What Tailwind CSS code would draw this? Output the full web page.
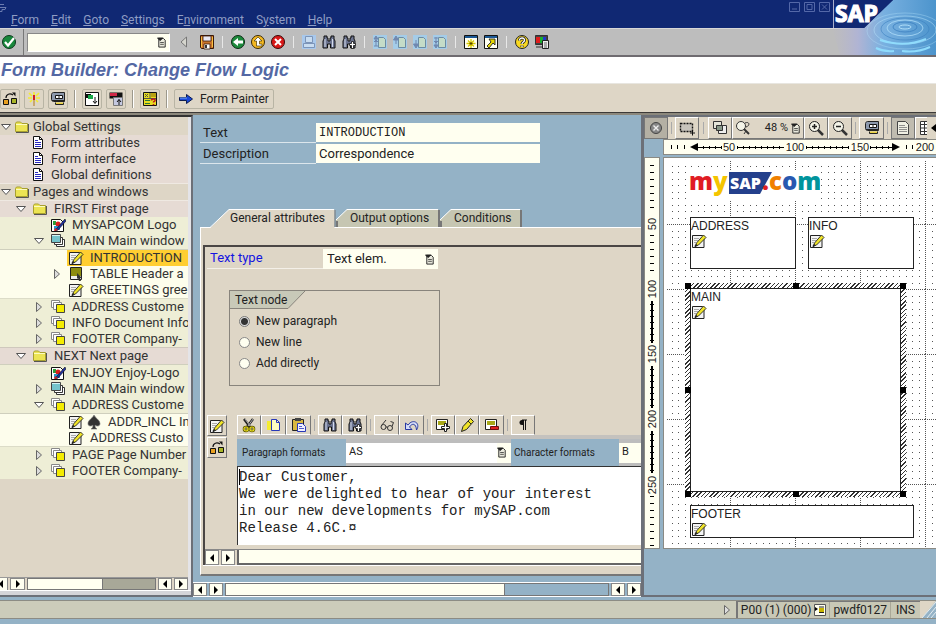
<!DOCTYPE html>
<html lang="en">
<head>
  <meta charset="UTF-8">
  <meta name="viewport" content="width=device-width, initial-scale=1.0">
  <title>Form Builder: Change Flow Logic</title>
  <script src="https://cdn.jsdelivr.net/npm/@tailwindcss/browser@4"></script>
</head>
<body class="min-h-screen flex flex-col overflow-hidden bg-[#94b2c6] font-[Roboto,'Liberation_Sans',sans-serif] text-xs text-[#222]">

  <!-- Icon sprite -->
  <svg class="hidden">
    <symbol id="i-check" viewBox="0 0 16 16"><circle cx="8" cy="8" r="6.5" fill="#18883c" stroke="#0c3a1c"/><path d="M4 8l3 3.5L13 4" fill="none" stroke="#fff" stroke-width="2.2"/></symbol>
    <symbol id="i-list" viewBox="0 0 10 12"><path d="M1.500 1.500h5l2 2v7.500h-7z" fill="#e8e8dc" stroke="#222"/><path d="M0 1h6L3 4zM3 6h4M3 8h4" fill="#222" stroke="#222" stroke-width=".8"/></symbol>
    <symbol id="i-left" viewBox="0 0 10 12"><path d="M7.500 1v10L2 6z" fill="#d6d6ce" stroke="#777"/></symbol>
    <symbol id="i-save" viewBox="0 0 16 16"><path d="M1.500 1.500h13v13h-12l-1-1z" fill="#c8742c" stroke="#3a1a08"/><path d="M4 2h8v5H4z" fill="#e8e8f4" stroke="#3a1a08" stroke-width=".8"/><path d="M5 10h6v5H5z" fill="#fff" stroke="#3a1a08" stroke-width=".8"/><path d="M6 11h2v3H6z" fill="#333"/><path d="M2.500 3v10M13.500 3v10" stroke="#f8c040"/></symbol>
    <symbol id="i-back" viewBox="0 0 16 16"><circle cx="8" cy="8" r="6.500" fill="#1c8a3c" stroke="#0c2a14"/><path d="M3 8l5-4v2.500h5v3H8V12z" fill="#fff"/></symbol>
    <symbol id="i-exit" viewBox="0 0 16 16"><circle cx="8" cy="8" r="6.500" fill="#f4b820" stroke="#3a2a08"/><path d="M8 3l4 4h-2.500v3H12v2H6.500V7H4z" fill="#fff" stroke="#4a3a08" stroke-width=".7"/></symbol>
    <symbol id="i-cancel" viewBox="0 0 16 16"><circle cx="8" cy="8" r="6.500" fill="#d81818" stroke="#3a0808"/><path d="M5 5l6 6M11 5l-6 6" stroke="#fff" stroke-width="2"/></symbol>
    <symbol id="i-print" viewBox="0 0 16 16"><path d="M1 1h14v14H1z" fill="#a8c8ec"/><path d="M4.500 2.500h7v6h-7zM2.500 9.500h11v4h-11z" fill="#c8dcf0" stroke="#7c94b8"/></symbol>
    <symbol id="i-find" viewBox="0 0 16 16"><path d="M3 2h3v2h1v3h2V4h1V2h3v3l1 2v7H9.500v-4h-3v4H2V7l1-2z" fill="#6c7490" stroke="#111"/><path d="M4 5v8M11.500 5v8" stroke="#d4dcec"/></symbol>
    <symbol id="i-findnext" viewBox="0 0 16 16"><path d="M3 2h3v2h1v3h2V4h1V2h3v3l1 2v7H9.500v-4h-3v4H2V7l1-2z" fill="#6c7490" stroke="#111"/><path d="M4 5v8" stroke="#d4dcec"/><path d="M10.500 7.500h2v2h2v2h-2v3h-2v-3h-2v-2h2z" fill="#fff" stroke="#111" stroke-width=".8"/></symbol>
    <symbol id="i-pg" viewBox="0 0 16 16"><path d="M1 1h14v14H1z" fill="#a4cce8"/><path d="M6.500 3.500h5l2 2v8h-7z" fill="#c4dcc8" stroke="#6c8ca4"/></symbol>
    <symbol id="i-up1" viewBox="0 0 16 16"><use href="#i-pg"/><path d="M4 5v7M2 5l2-3 2 3zM2 12h4M2 8l2-2 2 2" fill="#7088b0" stroke="#7088b0"/></symbol>
    <symbol id="i-up2" viewBox="0 0 16 16"><use href="#i-pg"/><path d="M4 5v5M1.500 6L4 2l2.500 4z" fill="#7088b0" stroke="#7088b0"/></symbol>
    <symbol id="i-dn1" viewBox="0 0 16 16"><use href="#i-pg"/><path d="M4 6v5M1.500 10L4 14l2.500-4z" fill="#7088b0" stroke="#7088b0"/></symbol>
    <symbol id="i-dn2" viewBox="0 0 16 16"><use href="#i-pg"/><path d="M4 3v8M2 11l2 3 2-3zM2 4h4M2 7l2 2 2-2" fill="#7088b0" stroke="#7088b0"/></symbol>
    <symbol id="i-session" viewBox="0 0 16 16"><path d="M1.500 1.500h13v13h-13z" fill="#fffff0" stroke="#111"/><path d="M2 2h12v2H2z" fill="#1c5894"/><path d="M8 5v9M3.500 9.500h9M5 6.500l6 6M11 6.500l-6 6" stroke="#d8c800" stroke-width="1.300"/><path d="M8 8v3M6.500 9.500h3" stroke="#554400"/></symbol>
    <symbol id="i-shortcut" viewBox="0 0 16 16"><path d="M1.500 1.500h13v13h-13z" fill="#fffff0" stroke="#111"/><path d="M2 2h12v2H2z" fill="#1c5894"/><path d="M6 5h6v6l-2-2-4 5-2-2 4-4z" fill="#e8d800" stroke="#222" stroke-width=".9"/></symbol>
    <symbol id="i-help" viewBox="0 0 16 16"><circle cx="8" cy="8" r="6.500" fill="#f8d820" stroke="#222"/><path d="M5.500 6.500c0-3.500 5.500-3.200 5 0C10.200 8 8 8 8 10M8 11.500V13" fill="none" stroke="#222" stroke-width="3"/><path d="M5.500 6.500c0-3.500 5.500-3.200 5 0C10.200 8 8 8 8 10M8 11.500V13" fill="none" stroke="#fff" stroke-width="1.300"/></symbol>
    <symbol id="i-layout" viewBox="0 0 16 16"><path d="M1.500 1.500h12v9h-12z" fill="#444" stroke="#333"/><path d="M2 3h4v6H2z" fill="#e01c1c"/><path d="M6 3h3v6H6z" fill="#18b030"/><path d="M9 3h3v6H9z" fill="#2038d0"/><path d="M2 12h8v2H2z" fill="#777"/><path d="M8.500 6.500h6v8h-6z" fill="#eee" stroke="#222"/><path d="M10 9h3M10 11h3M10 13h3" stroke="#444" stroke-width=".8"/></symbol>

    <symbol id="i-flow" viewBox="0 0 16 16"><path d="M1.500 8.500h5v5h-5z" fill="#e8a020" stroke="#111"/><path d="M9.500 7.500h5v5h-5z" fill="#a8b428" stroke="#111"/><path d="M4 7C4 3 8 2 11 4" fill="none" stroke="#111" stroke-width="1.200"/><path d="M10 1.500h3.500v4z" fill="#111"/></symbol>
    <symbol id="i-wand" viewBox="0 0 16 16"><path d="M8 1v4M3 2l3 3M13 2l-3 3M2 7h4M10 7h4M4 11l2-2M12 11l-2-2" stroke="#f4ec30" stroke-width="1.600"/><path d="M7 4h2v5H7z" fill="#d02020"/><path d="M7 9h2v6H7z" fill="#c8a870"/></symbol>
    <symbol id="i-gauge" viewBox="0 0 16 16"><path d="M1.500 3.500c0-1 1-2 2-2h11v9h-11c-1 0-2-1-2-2z" fill="#8c98ac" stroke="#222"/><path d="M5.500 4.500h7v3h-7z" fill="#fff" stroke="#111"/><path d="M9 4v4M2 9.500h12" stroke="#222"/><path d="M5.500 11.500v2h8v-2" fill="#e8d040" stroke="#222"/></symbol>
    <symbol id="i-pgdown" viewBox="0 0 16 16"><path d="M1.500 1.500h13v13h-13z" fill="#fff" stroke="#111"/><path d="M2 3h5v4H2z" fill="#111"/><path d="M4 4h5v4H4z" fill="#18a848"/><path d="M11 6v6M9 10l2 2.500 2-2.500" fill="none" stroke="#111"/></symbol>
    <symbol id="i-pgup" viewBox="0 0 16 16"><path d="M1.500 1.500h13v6h-13z" fill="#111"/><path d="M2 2h7v3H2z" fill="#d02848"/><path d="M5.500 6.500h9v8h-9z" fill="#c4c8e0" stroke="#777"/><path d="M11 14V8.500M9 11l2-2.500 2 2.500" fill="none" stroke="#111"/></symbol>
    <symbol id="i-check2" viewBox="0 0 16 16"><path d="M1.500 1.500h13v13h-13z" fill="#e8dc20" stroke="#111"/><path d="M3 3l3 3M6 3L3 6M8 2v5M2 7.500h12" stroke="#554"/><path d="M3 9.500h5M3 12.500h5" stroke="#287838"/><path d="M9 2h5v4H9z" fill="#b8a010"/><path d="M9.500 9.500c0-2 4-2 3.500 0-.3 1-1.500.8-1.500 2M11.500 13v1.300" fill="none" stroke="#c01818" stroke-width="1.600"/></symbol>
    <symbol id="i-arrow" viewBox="0 0 16 16"><path d="M1.500 6.500h7v-3L14.500 8l-6 4.500v-3h-7z" fill="#1848d8" stroke="#0c1c50"/><path d="M2 7h7" stroke="#78a8f8"/></symbol>

    <symbol id="i-open" viewBox="0 0 12 12"><path d="M1.500 3.500h9L6 8.500z" fill="#fff" stroke="#555"/></symbol>
    <symbol id="i-closed" viewBox="0 0 12 12"><path d="M3.500 1.500v9L8.500 6z" fill="#ddd" stroke="#666"/></symbol>
    <symbol id="i-folder" viewBox="0 0 16 16"><path d="M1.500 12.500v-8l1-1.500h4l1.500 1.500h5.500v8z" fill="#ece454" stroke="#a8a030"/><path d="M2 5.500h11" stroke="#fcfcc0"/><path d="M14.500 5v8.500H2" fill="none" stroke="#555"/></symbol>
    <symbol id="i-doc" viewBox="0 0 16 16"><path d="M3.500 1.500h6l3 3v9h-9z" fill="#fff" stroke="#111"/><path d="M9.500 1.500v3h3" fill="none" stroke="#111"/><path d="M5 5.500h3M5 7.500h6M5 9.500h6M5 11.500h6" stroke="#2828c0"/></symbol>
    <symbol id="i-image" viewBox="0 0 16 16"><path d="M1.500 2.500h9l3 3v9h-12z" fill="#fff" stroke="#111"/><path d="M3 4h3v4H3z" fill="#28a038"/><circle cx="8" cy="7" r="2.500" fill="#d82020"/><path d="M4 9h6v4H4z" fill="#2898d0"/><path d="M15 2l-8 9-2 3 3-1 8-9z" fill="#2030a0" stroke="#111" stroke-width=".6"/><path d="M4 14l4-1-3-2z" fill="#d82020"/></symbol>
    <symbol id="i-winmain" viewBox="0 0 16 16"><path d="M6.500 6.500h8v7h-8z" fill="#fff" stroke="#333"/><path d="M4.500 4.500h8v7h-8z" fill="#fff" stroke="#333"/><path d="M1.500 1.500h9v8h-9z" fill="#74c4cc" stroke="#444"/><path d="M2 2.500h8" stroke="#d4f4f4"/></symbol>
    <symbol id="i-win" viewBox="0 0 16 16"><path d="M1.500 1.500h8v7h-8z" fill="#fff" stroke="#888"/><path d="M3.500 3.500h8v7h-8z" fill="#fff" stroke="#888"/><path d="M6.500 5.500h8v8h-8z" fill="#f4ec00" stroke="#444"/></symbol>
    <symbol id="i-edit" viewBox="0 0 16 16"><path d="M1.500 2.500h10l1.500 1.500v10.500H1.500z" fill="#f4f4f4" stroke="#222"/><path d="M3 5.500h5M3 7.500h4M3 9.500h2" stroke="#aaa"/><path d="M12.500 2L15 4.500 7.500 12 4 13.500 5.500 10z" fill="#f0e428" stroke="#222" stroke-width=".9"/><path d="M4 13.500l2-2" stroke="#222" stroke-width="1.500"/></symbol>
    <symbol id="i-table" viewBox="0 0 16 16"><path d="M2.500 1.500h11v12h-11z" fill="#eee" stroke="#222"/><path d="M3 2h10v8H3z" fill="#8c8c10"/><path d="M9 7l5 5h-2l1 3h-2l-1-3-1 1z" fill="#333"/></symbol>
    <symbol id="i-spade" viewBox="0 0 16 16"><path d="M8 1c1 3 6 5 6 8.500 0 3-3.500 3-5 1.500 0 2 .5 3 2 4H5c1.500-1 2-2 2-4-1.500 1.500-5 1.500-5-1.500C2 6 7 4 8 1z" fill="#333" stroke="#777" stroke-width=".6"/></symbol>

    <symbol id="i-cut" viewBox="0 0 16 16"><path d="M3 2l6 8M12 2L6 10" stroke="#222" stroke-width="2.400"/><path d="M4 2l5 7M12 2L7 9" stroke="#ccc" stroke-width=".8"/><circle cx="5" cy="12" r="2" fill="none" stroke="#555000" stroke-width="2.600"/><circle cx="11" cy="12" r="2" fill="none" stroke="#555000" stroke-width="2.600"/><circle cx="5" cy="12" r="2" fill="none" stroke="#e8dc20" stroke-width="1.200"/><circle cx="11" cy="12" r="2" fill="none" stroke="#e8dc20" stroke-width="1.200"/></symbol>
    <symbol id="i-copy" viewBox="0 0 16 16"><path d="M1 4h7v9H1z" fill="#f4ec30"/><path d="M5.500 2.500h5l3 3v8h-8z" fill="#fcfcc0" stroke="#2838b8"/><path d="M10.500 2.500v3h3" fill="none" stroke="#2838b8"/></symbol>
    <symbol id="i-paste" viewBox="0 0 16 16"><path d="M1.500 2.500h11v11h-11z" fill="#d8b840" stroke="#222"/><path d="M4 1h6v3H4z" fill="#444"/><path d="M6.500 6.500h5l3 3v5h-8z" fill="#f0f0ff" stroke="#2838b8"/><path d="M8 9.500h3M8 11.500h5" stroke="#2838b8" stroke-width=".8"/></symbol>
    <symbol id="i-glasses" viewBox="0 0 16 16"><circle cx="4.500" cy="10" r="2.500" fill="none" stroke="#333"/><circle cx="11" cy="11" r="2.500" fill="none" stroke="#333"/><path d="M7 10h1.500M2.500 8.500L7 3M13 9.500l1.500-4-3-1" fill="none" stroke="#333"/></symbol>
    <symbol id="i-undo" viewBox="0 0 16 16"><path d="M1.500 6v6.500H8L5.500 10C8 6 12 6 12.500 13 17 6 9 1 4 8z" fill="#d4dcf8" stroke="#2838a0"/></symbol>
    <symbol id="i-insert" viewBox="0 0 16 16"><path d="M1.500 2.500h11v10h-11z" fill="#fff" stroke="#222"/><path d="M3 4h8v4H3z" fill="#a8a818"/><path d="M9.500 6.500h2v3h3v2h-3v3h-2v-3h-3v-2h3z" fill="#fff" stroke="#222"/></symbol>
    <symbol id="i-pencil" viewBox="0 0 16 16"><path d="M11.500 1.500l3 3-7 8-5 2 1.500-5z" fill="#f0e428" stroke="#222"/><path d="M9 4l3 3" stroke="#222"/></symbol>
    <symbol id="i-delete" viewBox="0 0 16 16"><path d="M1.500 2.500h11v10h-11z" fill="#fff" stroke="#222"/><path d="M3 4h8v4H3z" fill="#a8a818"/><path d="M6.500 9.500h8v3h-8z" fill="#e02020" stroke="#701010"/></symbol>
    <symbol id="i-para" viewBox="0 0 16 16"><path d="M9 3H7a2.500 2.500 0 0 0 0 5h2z" fill="#111"/><path d="M8.500 3v10M10.500 3v10M7 3h5" stroke="#111"/></symbol>

    <symbol id="i-close" viewBox="0 0 16 16"><circle cx="8" cy="8" r="5.500" fill="#888" stroke="#444"/><path d="M5.500 5.500l5 5M10.500 5.500l-5 5" stroke="#eee" stroke-width="1.400"/></symbol>
    <symbol id="i-marquee" viewBox="0 0 16 16"><path d="M1.500 3.500h12v8h-12z" fill="#c8c4bc" stroke="#111" stroke-width="1.400" stroke-dasharray="2 1"/><path d="M11 13h5M13.500 10.500v5" stroke="#111"/></symbol>
    <symbol id="i-overlap" viewBox="0 0 16 16"><path d="M1.500 1.500h8v7h-8z" fill="#e4e4d8" stroke="#333"/><path d="M6.500 5.500h8v8h-8z" fill="#eee" stroke="#333"/><path d="M4.500 5.500h6v5h-6z" fill="#889888" stroke="#333"/></symbol>
    <symbol id="i-zoomset" viewBox="0 0 16 16"><circle cx="6" cy="6" r="4.500" fill="#f4f4e8" stroke="#333"/><path d="M9 9l5 5" stroke="#333" stroke-width="2"/><path d="M10 3c5-2 5 3 1 4M11 11l-2 3" fill="none" stroke="#333"/></symbol>
    <symbol id="i-zoomin" viewBox="0 0 16 16"><path d="M10 10l5 5" stroke="#333" stroke-width="2.500"/><circle cx="6.500" cy="6.500" r="5" fill="#f4f4e8" stroke="#222"/><path d="M4 6.500h5M6.500 4v5" stroke="#222" stroke-width="1.500"/></symbol>
    <symbol id="i-zoomout" viewBox="0 0 16 16"><path d="M10 10l5 5" stroke="#333" stroke-width="2.500"/><circle cx="6.500" cy="6.500" r="5" fill="#f4f4e8" stroke="#222"/><path d="M4 6.500h5" stroke="#222" stroke-width="1.500"/></symbol>
    <symbol id="i-page" viewBox="0 0 16 16"><path d="M2.500 1.500h8l3 3v10h-11z" fill="#f0f0e4" stroke="#444"/><path d="M4 5.500h6M4 7.500h8M4 9.500h8M4 11.500h8" stroke="#777" stroke-width=".8"/></symbol>
    <symbol id="i-grid" viewBox="0 0 16 16"><path d="M4.500 1.500h14v13h-14zM4 4.500h14M4 8h14M4 11.500h14M8.500 1v14" fill="#fff" stroke="#333"/></symbol>
    <symbol id="i-sbl" viewBox="0 0 12 12"><path d="M8 2v8L4 6z" fill="#000"/></symbol>
    <symbol id="i-sbr" viewBox="0 0 12 12"><path d="M4 2v8l4-4z" fill="#000"/></symbol>
  </svg>

  <header class="relative">
    <!-- Menu bar -->
    <nav class="flex items-end h-7 bg-[#102873] text-[#8f9dc4]">
      <svg class="absolute left-0 top-0.5 w-2 h-3" viewBox="0 0 8 12" fill="none" stroke="#6c7cb0"><path d="M0 2.500h4M0 5.500h6l-1 2H2v2H0"/></svg>
      <div class="flex gap-3 pl-[11px] leading-4">
        <button><u>F</u>orm</button>
        <button><u>E</u>dit</button>
        <button><u>G</u>oto</button>
        <button><u>S</u>ettings</button>
        <button>E<u>n</u>vironment</button>
        <button>S<u>y</u>stem</button>
        <button><u>H</u>elp</button>
      </div>
      <div class="flex gap-1 self-start ml-auto mr-[106px] pt-0.5">
        <button aria-label="Minimize"><svg class="w-[11px] h-[10px]" viewBox="0 0 11 10" fill="none" stroke="#5468a8"><path d="M.5.5h10v9H.5zM3 7h5"/></svg></button>
        <button aria-label="Maximize"><svg class="w-[11px] h-[10px]" viewBox="0 0 11 10" fill="none" stroke="#5468a8"><path d="M.5.5h10v9H.5zM3 2.500h5v5H3z"/></svg></button>
        <button aria-label="Close"><svg class="w-[11px] h-[10px]" viewBox="0 0 11 10" fill="none" stroke="#5468a8"><path d="M.5.5h10v9H.5zM3 2.500l5 5M8 2.500l-5 5"/></svg></button>
      </div>
    </nav>

    <!-- Standard toolbar -->
    <div class="flex items-center h-[29px] bg-[#bdbdbd] border-t border-t-[#d8d8d8] border-b-2 border-b-[#6f6b70]">
      <button class="w-[23px] pl-px" aria-label="Enter"><svg class="size-4"><use href="#i-check"/></svg></button>
      <div class="flex items-center self-stretch border-l border-[#777] pl-[3px]">
        <div class="flex items-center w-[143px] h-[19px] bg-[#fffff0] border border-t-[#888] border-l-[#888] border-white">
          <input class="min-w-0 flex-1 outline-none px-1" aria-label="Command">
          <button class="px-0.5" aria-label="Command history"><svg class="w-[10px] h-[11px]"><use href="#i-list"/></svg></button>
        </div>
      </div>
      <button class="w-[27px] pl-[9px]" aria-label="Collapse"><svg class="w-[10px] h-3"><use href="#i-left"/></svg></button>
      <button class="w-5 flex justify-center" aria-label="Save"><svg class="size-4"><use href="#i-save"/></svg></button>
      <span class="mx-[5px] w-px h-3 bg-[#e8e8e8]"></span>
      <button class="w-5 flex justify-center" aria-label="Back"><svg class="size-4"><use href="#i-back"/></svg></button>
      <button class="w-5 flex justify-center" aria-label="Exit"><svg class="size-4"><use href="#i-exit"/></svg></button>
      <button class="w-5 flex justify-center" aria-label="Cancel"><svg class="size-4"><use href="#i-cancel"/></svg></button>
      <span class="mx-[5px] w-px h-3 bg-[#e8e8e8]"></span>
      <button class="w-5 flex justify-center" aria-label="Print"><svg class="size-4"><use href="#i-print"/></svg></button>
      <button class="w-5 flex justify-center" aria-label="Find"><svg class="size-4"><use href="#i-find"/></svg></button>
      <button class="w-5 flex justify-center" aria-label="Find next"><svg class="size-4"><use href="#i-findnext"/></svg></button>
      <span class="mx-[5px] w-px h-3 bg-[#e8e8e8]"></span>
      <button class="w-5 flex justify-center" aria-label="First page"><svg class="size-4"><use href="#i-up1"/></svg></button>
      <button class="w-5 flex justify-center" aria-label="Previous page"><svg class="size-4"><use href="#i-up2"/></svg></button>
      <button class="w-5 flex justify-center" aria-label="Next page"><svg class="size-4"><use href="#i-dn1"/></svg></button>
      <button class="w-5 flex justify-center" aria-label="Last page"><svg class="size-4"><use href="#i-dn2"/></svg></button>
      <span class="mx-[5px] w-px h-3 bg-[#e8e8e8]"></span>
      <button class="w-5 flex justify-center" aria-label="New session"><svg class="size-4"><use href="#i-session"/></svg></button>
      <button class="w-5 flex justify-center" aria-label="Create shortcut"><svg class="size-4"><use href="#i-shortcut"/></svg></button>
      <span class="mx-[5px] w-px h-3 bg-[#e8e8e8]"></span>
      <button class="w-5 flex justify-center" aria-label="Help"><svg class="size-4"><use href="#i-help"/></svg></button>
      <button class="w-5 flex justify-center" aria-label="Customize layout"><svg class="size-4"><use href="#i-layout"/></svg></button>
    </div>

    <!-- SAP logo with ripples -->
    <svg class="absolute right-0 top-0 w-[104px] h-[55px]" viewBox="0 0 104 55">
      <defs>
        <linearGradient id="water" x1="0" y1="0" x2="1" y2="0">
          <stop offset="0" stop-color="#b8b6cc" stop-opacity="0"/>
          <stop offset=".25" stop-color="#b0b4d4"/>
          <stop offset=".5" stop-color="#78b0e0"/>
          <stop offset="1" stop-color="#4c94cc"/>
        </linearGradient>
      </defs>
      <path d="M0 28h32L61 0h43v55H8z" fill="url(#water)"/>
      <g fill="none" stroke="#b8e4fc">
        <ellipse cx="73" cy="27" rx="6" ry="2" stroke-opacity=".9"/>
        <ellipse cx="73" cy="27" rx="12" ry="5" stroke="#3c80c0" stroke-opacity=".8"/>
        <ellipse cx="73" cy="28" rx="18" ry="8" stroke-opacity=".7"/>
        <ellipse cx="73" cy="29" rx="24" ry="11" stroke="#3c80c0" stroke-opacity=".6"/>
        <ellipse cx="73" cy="30" rx="31" ry="14" stroke-opacity=".5"/>
        <ellipse cx="73" cy="31" rx="38" ry="18" stroke-opacity=".35"/>
        <path d="M48 40q24 8 46-1M44 48q8 4 18 3M70 51q15 2 28-4" stroke-width="2" stroke="#90dcfc"/>
      </g>
      <path d="M0 0h61L32 28H0z" fill="#102873"/>
      <path d="M1.500 0v28" stroke="#a8b0cc"/>
      <text x="3" y="22" font-family="Open Sans" font-weight="700" font-size="23" fill="#fff" stroke="#fff" stroke-width="1.200">SAP</text>
    </svg>
  </header>

  <h1 class="h-[27px] bg-white border-b border-[#e8e6e0] pt-px pl-px font-['Liberation_Sans',sans-serif] text-lg leading-6 font-bold italic text-[#5468a4]">Form Builder: Change Flow Logic</h1>

  <!-- Application toolbar -->
  <div class="flex items-center h-7 pt-0.5 bg-[#ded6c6]">
    <button class="size-5 flex items-center justify-center border border-[#b8b4a4] rounded-xs" aria-label="Check flow"><svg class="size-4"><use href="#i-flow"/></svg></button>
    <button class="ml-1 size-5 flex items-center justify-center border border-[#b8b4a4] rounded-xs" aria-label="Activate"><svg class="size-4"><use href="#i-wand"/></svg></button>
    <button class="ml-1 size-5 flex items-center justify-center border border-[#b8b4a4] rounded-xs" aria-label="Test"><svg class="size-4"><use href="#i-gauge"/></svg></button>
    <span class="mx-[6px] w-0.5 h-[18px] bg-[#9c988c] border-r border-white"></span>
    <button class="size-5 flex items-center justify-center border border-[#b8b4a4] rounded-xs" aria-label="Page down"><svg class="size-4"><use href="#i-pgdown"/></svg></button>
    <button class="ml-1 size-5 flex items-center justify-center border border-[#b8b4a4] rounded-xs" aria-label="Page up"><svg class="size-4"><use href="#i-pgup"/></svg></button>
    <span class="mx-[6px] w-0.5 h-[18px] bg-[#9c988c] border-r border-white"></span>
    <button class="size-5 flex items-center justify-center border border-[#b8b4a4] rounded-xs" aria-label="Field list"><svg class="size-4"><use href="#i-check2"/></svg></button>
    <span class="mx-[6px] w-0.5 h-[18px] bg-[#9c988c] border-r border-white"></span>
    <button class="h-5 flex items-center gap-1.5 pl-[3px] pr-1 border border-[#b8b4a4] rounded-xs"><svg class="size-4"><use href="#i-arrow"/></svg>Form Painter</button>
  </div>
  <div class="h-[3px] bg-[#8c887c] border-t border-[#3c3a38]"></div>

  <main class="flex flex-1 min-h-0">
    <!-- Navigation tree -->
    <aside class="flex flex-col w-[193px] shrink-0 bg-[#ded6c6] border-t-2 border-t-[#333] border-r-2 border-r-[#6c7078] border-b-2 border-b-[#6c7078]">
      <div class="flex-1 flex flex-col border-r-3 border-[#e4e4e8] pt-0.5">
        <ul class="text-[13px] leading-4 whitespace-nowrap overflow-hidden text-[#333]">
          <li class="flex items-center h-4 bg-[#ded6c6]"><svg class="size-3"><use href="#i-open"/></svg><svg class="ml-0.5 size-4"><use href="#i-folder"/></svg><span class="pl-[3px]">Global Settings</span></li>
          <li class="flex items-center h-4 bg-[#e6dbd4] pl-[30px]"><svg class="size-4"><use href="#i-doc"/></svg><span class="pl-[5px]">Form attributes</span></li>
          <li class="flex items-center h-4 bg-[#e6dbd4] pl-[30px]"><svg class="size-4"><use href="#i-doc"/></svg><span class="pl-[5px]">Form interface</span></li>
          <li class="flex items-center h-4 bg-[#e6dbd4] pl-[30px]"><svg class="size-4"><use href="#i-doc"/></svg><span class="pl-[5px]">Global definitions</span></li>
          <li class="flex items-center h-[17px] border-t border-[#efe9e2] bg-[#ded6c6]"><svg class="size-3"><use href="#i-open"/></svg><svg class="ml-0.5 size-4"><use href="#i-folder"/></svg><span class="pl-[3px]">Pages and windows</span></li>
          <li class="flex items-center h-[17px] border-t border-[#efe9e2] bg-[#e6dbd4] pl-[15px]"><svg class="size-3"><use href="#i-open"/></svg><svg class="ml-[5px] size-4"><use href="#i-folder"/></svg><span class="pl-1.5">FIRST First page</span></li>
          <li class="flex items-center h-4 bg-[#eeeed6] pl-[50px]"><svg class="size-4"><use href="#i-image"/></svg><span class="pl-1.5">MYSAPCOM Logo</span></li>
          <li class="flex items-center h-4 bg-[#eeeed6] pl-[33px]"><svg class="size-3"><use href="#i-open"/></svg><svg class="ml-[5px] size-4"><use href="#i-winmain"/></svg><span class="pl-1.5">MAIN Main window</span></li>
          <li class="flex h-[17px] border-t border-[#cfcfbd] bg-[#fdfdec] pl-[67px]"><span class="flex flex-1 items-center bg-[#ffce31] pl-px"><svg class="size-4"><use href="#i-edit"/></svg><span class="pl-1.5">INTRODUCTION</span></span></li>
          <li class="flex items-center h-4 bg-[#fdfdec] pl-[51px]"><svg class="size-3"><use href="#i-closed"/></svg><svg class="ml-[5px] size-4"><use href="#i-table"/></svg><span class="pl-1.5">TABLE Header a</span></li>
          <li class="flex items-center h-4 bg-[#fdfdec] pl-[68px]"><svg class="size-4 shrink-0"><use href="#i-edit"/></svg><span class="pl-1.5">GREETINGS gree</span></li>
          <li class="flex items-center h-[17px] border-t border-[#dcdcc8] bg-[#eeeed6] pl-[33px]"><svg class="size-3 shrink-0"><use href="#i-closed"/></svg><svg class="ml-[5px] size-4 shrink-0"><use href="#i-win"/></svg><span class="pl-1.5">ADDRESS Custome</span></li>
          <li class="flex items-center h-4 bg-[#eeeed6] pl-[33px]"><svg class="size-3 shrink-0"><use href="#i-closed"/></svg><svg class="ml-[5px] size-4 shrink-0"><use href="#i-win"/></svg><span class="pl-1.5">INFO Document Info</span></li>
          <li class="flex items-center h-4 bg-[#eeeed6] pl-[33px]"><svg class="size-3 shrink-0"><use href="#i-closed"/></svg><svg class="ml-[5px] size-4 shrink-0"><use href="#i-win"/></svg><span class="pl-1.5">FOOTER Company-</span></li>
          <li class="flex items-center h-[17px] border-t border-[#cfc8bd] bg-[#e6dbd4] pl-[15px]"><svg class="size-3"><use href="#i-open"/></svg><svg class="ml-[5px] size-4"><use href="#i-folder"/></svg><span class="pl-1.5">NEXT Next page</span></li>
          <li class="flex items-center h-[17px] border-t border-[#cfcfbd] bg-[#eeeed6] pl-[50px]"><svg class="size-4"><use href="#i-image"/></svg><span class="pl-1.5">ENJOY Enjoy-Logo</span></li>
          <li class="flex items-center h-4 bg-[#eeeed6] pl-[33px]"><svg class="size-3"><use href="#i-closed"/></svg><svg class="ml-[5px] size-4"><use href="#i-winmain"/></svg><span class="pl-1.5">MAIN Main window</span></li>
          <li class="flex items-center h-4 bg-[#eeeed6] pl-[33px]"><svg class="size-3 shrink-0"><use href="#i-open"/></svg><svg class="ml-[5px] size-4 shrink-0"><use href="#i-win"/></svg><span class="pl-1.5">ADDRESS Custome</span></li>
          <li class="flex items-center h-[17px] border-t border-[#cfcfbd] bg-[#fdfdec] pl-[68px]"><svg class="size-4 shrink-0"><use href="#i-edit"/></svg><svg class="ml-0.5 size-4 shrink-0"><use href="#i-spade"/></svg><span class="pl-1.5">ADDR_INCL In</span></li>
          <li class="flex items-center h-4 bg-[#fdfdec] pl-[68px]"><svg class="size-4 shrink-0"><use href="#i-edit"/></svg><span class="pl-1.5">ADDRESS Custo</span></li>
          <li class="flex items-center h-[17px] border-t border-[#dcdcc8] bg-[#eeeed6] pl-[33px]"><svg class="size-3 shrink-0"><use href="#i-closed"/></svg><svg class="ml-[5px] size-4 shrink-0"><use href="#i-win"/></svg><span class="pl-1.5">PAGE Page Number</span></li>
          <li class="flex items-center h-4 bg-[#eeeed6] pl-[33px]"><svg class="size-3 shrink-0"><use href="#i-closed"/></svg><svg class="ml-[5px] size-4 shrink-0"><use href="#i-win"/></svg><span class="pl-1.5">FOOTER Company-</span></li>
        </ul>
        <!-- Tree scrollbar -->
        <div class="mt-auto flex h-[13px] gap-0.5 border-t border-[#999]">
          <button class="w-2 flex items-center justify-end bg-[#fffff0] border-r border-[#888]" aria-label="Scroll left"><svg class="size-3 shrink-0"><use href="#i-sbl"/></svg></button>
          <button class="w-[15px] flex items-center justify-center bg-[#fffff0] border border-[#888]" aria-label="Scroll right"><svg class="size-3"><use href="#i-sbr"/></svg></button>
          <div class="flex-1 flex bg-[#a8a898] border border-[#777]"><span class="w-[59%] bg-[#fffff0] border-r border-[#777]"></span></div>
          <button class="w-[14px] flex items-center justify-center bg-[#fffff0] border border-[#888]" aria-label="Scroll left"><svg class="size-3"><use href="#i-sbl"/></svg></button>
          <button class="w-[14px] flex items-center justify-center bg-[#fffff0] border border-[#888]" aria-label="Scroll right"><svg class="size-3"><use href="#i-sbr"/></svg></button>
        </div>
      </div>
      <div class="h-[5px] bg-[#d4d4d8] border-t border-white"></div>
    </aside>

    <!-- Node maintenance -->
    <section class="flex-1 min-w-0 flex flex-col">
      <div class="flex-1 flex flex-col pl-[7px] pt-2">
        <div class="flex flex-col gap-px text-[13px]">
          <div class="flex h-5"><label for="node" class="w-[116px] pl-[3px] leading-[19px] border-b border-[#dce6ec]">Text</label><input id="node" value="INTRODUCTION" class="w-56 h-[19px] px-[3px] bg-[#fffff0] font-['Liberation_Mono',monospace] text-xs"></div>
          <div class="flex h-5"><label for="desc" class="w-[116px] pl-[3px] leading-[19px] border-b border-[#dce6ec]">Description</label><input id="desc" value="Correspondence" class="w-56 h-[19px] px-[3px] bg-[#fffff0]"></div>
        </div>

        <!-- Tabs -->
        <div class="mt-[45px] flex h-[18px] pl-2.5">
          <button class="relative z-10 w-[126px] pl-5 text-left text-xs"><svg class="absolute inset-0 w-[126px] h-[19px]" viewBox="0 0 126 19"><path d="M0 19L19 .5h105.500V19z" fill="#ded6c6"/><path d="M0 18.500L19 .5h105" fill="none" stroke="#fff"/><path d="M125 1v17" stroke="#777"/></svg><span class="relative">General attributes</span></button>
          <button class="relative w-[104px] pl-[13px] text-left text-xs"><svg class="absolute inset-0 w-[104px] h-[18px]" viewBox="0 0 104 18"><path d="M0 18v-7L11 .5h91.500V18z" fill="#c6c6b2"/><path d="M0 11L11 .5h91" fill="none" stroke="#fff"/><path d="M103 1v17M1 12v6" stroke="#777" stroke-width="2"/></svg><span class="relative pl-px">Output options</span></button>
          <button class="relative w-[82px] pl-[13px] text-left text-xs"><svg class="absolute inset-0 w-[82px] h-[18px]" viewBox="0 0 82 18"><path d="M0 18v-7L11 .5h69.500V18z" fill="#c6c6b2"/><path d="M0 11L11 .5h69" fill="none" stroke="#fff"/><path d="M81 1v17M1 12v6" stroke="#777" stroke-width="2"/></svg><span class="relative pl-px">Conditions</span></button>
        </div>

        <!-- Tab page -->
        <div class="flex-1 flex flex-col bg-[#ded6c6] border-t border-l border-white border-b-2 border-b-[#777] pt-[17px] pl-0.5">
          <div class="flex flex-col flex-1 border-t-2 border-l-2 border-[#4a4644] pt-0.5">
            <div class="flex h-5 pl-0.5 text-[13px]">
              <label for="ttype" class="w-[116px] pl-[3px] leading-[18px] text-[#1414e0] border-b border-[#f4f0e8]">Text type</label>
              <div class="flex items-center w-[115px] bg-[#fffff0]">
                <select id="ttype" class="flex-1 appearance-none pl-1 outline-none"><option>Text elem.</option></select>
                <svg class="mr-[3px] w-[10px] h-[11px] pointer-events-none"><use href="#i-list"/></svg>
              </div>
            </div>

            <fieldset class="mt-[21px] ml-6 w-[211px] h-24 border border-[#88847c]">
              <legend class="relative float-left w-[76px] h-[18px]"><svg class="absolute inset-0 w-[76px] h-[18px]" viewBox="0 0 76 18"><path d="M0 0h75L58 17.500H0z" fill="#c8c9b8"/><path d="M75 0L58 17.500H0" fill="none" stroke="#88847c"/></svg><span class="relative pl-[5px] leading-[18px]">Text node</span></legend>
              <div class="clear-left flex flex-col gap-[5px] pt-1 pl-[9px]">
                <label class="flex items-center gap-1.5"><input type="radio" name="nodepos" checked class="appearance-none size-[11px] rounded-full bg-[#fffff0] border border-[#777] checked:bg-[radial-gradient(circle,#333_0_3px,#ddd_4px)]">New paragraph</label>
                <label class="flex items-center gap-1.5"><input type="radio" name="nodepos" class="appearance-none size-[11px] rounded-full bg-[#fffff0] border border-[#888] checked:bg-[#333]">New line</label>
                <label class="flex items-center gap-1.5"><input type="radio" name="nodepos" class="appearance-none size-[11px] rounded-full bg-[#fffff0] border border-[#888] checked:bg-[#333]">Add directly</label>
              </div>
            </fieldset>

            <!-- Inline editor -->
            <div class="mt-[29px] flex flex-1 min-h-0 pl-0.5">
              <div class="flex flex-col w-[30px] gap-px">
                <button class="w-5 h-[21px] flex items-center justify-center border border-white border-r-[#777] border-b-[#777]" aria-label="Text editor"><svg class="size-4"><use href="#i-edit"/></svg></button>
                <button class="w-5 h-[21px] flex items-center justify-center border border-white border-r-[#777] border-b-[#777]" aria-label="Check"><svg class="size-4"><use href="#i-flow"/></svg></button>
              </div>
              <div class="flex-1 min-w-0 flex flex-col">
                <div class="flex h-5 items-center">
                  <button class="w-6 h-5 flex items-center justify-center border border-white border-r-[#777]" aria-label="Cut"><svg class="size-4"><use href="#i-cut"/></svg></button>
                  <button class="w-[25px] h-5 flex items-center justify-center border border-white border-r-[#777]" aria-label="Copy"><svg class="size-4"><use href="#i-copy"/></svg></button>
                  <button class="w-[25px] h-5 flex items-center justify-center border border-white border-r-[#777]" aria-label="Paste"><svg class="size-4"><use href="#i-paste"/></svg></button>
                  <span class="mx-[3px] w-px h-3 bg-[#aaa]"></span>
                  <button class="w-6 h-5 flex items-center justify-center border border-white border-r-[#777]" aria-label="Find"><svg class="size-4"><use href="#i-find"/></svg></button>
                  <button class="w-[25px] h-5 flex items-center justify-center border border-white border-r-[#777]" aria-label="Find next"><svg class="size-4"><use href="#i-findnext"/></svg></button>
                  <span class="mx-[3px] w-px h-3 bg-[#aaa]"></span>
                  <button class="w-[25px] h-5 flex items-center justify-center border border-white border-r-[#777]" aria-label="Display"><svg class="size-4"><use href="#i-glasses"/></svg></button>
                  <button class="w-[25px] h-5 flex items-center justify-center border border-white border-r-[#777]" aria-label="Undo"><svg class="size-4"><use href="#i-undo"/></svg></button>
                  <span class="mx-[3px] w-px h-3 bg-[#aaa]"></span>
                  <button class="w-6 h-5 flex items-center justify-center border border-white border-r-[#777]" aria-label="Insert field"><svg class="size-4"><use href="#i-insert"/></svg></button>
                  <button class="w-6 h-5 flex items-center justify-center border border-white border-r-[#777]" aria-label="Change field"><svg class="size-4"><use href="#i-pencil"/></svg></button>
                  <button class="w-[25px] h-5 flex items-center justify-center border border-white border-r-[#777]" aria-label="Delete field"><svg class="size-4"><use href="#i-delete"/></svg></button>
                  <span class="mx-[3px] w-px h-3 bg-[#aaa]"></span>
                  <button class="w-6 h-5 flex items-center justify-center border border-white border-r-[#777]" aria-label="Show paragraph marks"><svg class="size-4"><use href="#i-para"/></svg></button>
                </div>
                <div class="h-1 bg-[#c4c2be]"></div>
                <div class="flex items-center h-[27px] bg-[#bdbdbd] text-[11px]">
                  <label for="pf" class="w-[109px] pl-[5px] text-[10px] leading-[27px] bg-[#94b2c6]">Paragraph formats</label>
                  <div class="flex items-center w-[165px] h-5 bg-[#fffff0]">
                    <select id="pf" class="flex-1 appearance-none pl-[3px] bg-white h-5 outline-none"><option>AS</option></select>
                    <svg class="mr-1 w-[10px] h-[11px] pointer-events-none"><use href="#i-list"/></svg>
                  </div>
                  <label for="cf" class="w-[108px] pl-[3px] text-[10px] leading-[27px] bg-[#94b2c6]">Character formats</label>
                  <select id="cf" class="flex-1 min-w-0 appearance-none pl-[3px] h-5 bg-[#fffff0] outline-none"><option>B</option></select>
                </div>
                <div class="relative flex-1 flex border-t border-l border-[#333] bg-white">
                  <span class="absolute left-px top-0.5 w-px h-4 bg-black"></span>
                  <textarea aria-label="Text" spellcheck="false" class="flex-1 min-w-0 resize-none overflow-hidden outline-none pl-px pt-0.5 font-['Liberation_Mono',monospace] text-sm leading-[17px]">Dear Customer,
We were delighted to hear of your interest
in our new developments for mySAP.com
Release 4.6C.¤</textarea>
                </div>
              </div>
            </div>
            <div class="mt-1 flex h-4 gap-0.5 border-t border-[#888]">
              <button class="w-[14px] flex items-center justify-center bg-[#fffff0] border border-[#888]" aria-label="Scroll left"><svg class="size-3"><use href="#i-sbl"/></svg></button>
              <button class="w-[14px] flex items-center justify-center bg-[#fffff0] border border-[#888]" aria-label="Scroll right"><svg class="size-3"><use href="#i-sbr"/></svg></button>
              <div class="flex-1 bg-[#fffff0] border-l-2 border-b-2 border-[#666]"></div>
            </div>
          </div>
          <div class="h-[9px] border-t border-white"></div>
        </div>
      </div>
      <!-- Pane scrollbar -->
      <div class="mt-1.5 flex h-[15px] gap-0.5 border-y border-white">
        <button class="w-[14px] flex items-center justify-center bg-[#fffff0] border border-[#888]" aria-label="Scroll left"><svg class="size-3"><use href="#i-sbl"/></svg></button>
        <button class="w-[14px] flex items-center justify-center bg-[#fffff0] border border-[#888]" aria-label="Scroll right"><svg class="size-3"><use href="#i-sbr"/></svg></button>
        <div class="flex-1 flex border border-[#777]"><span class="w-[73%] bg-[#fffff0] border-r border-[#777]"></span></div>
        <button class="w-[14px] flex items-center justify-center bg-[#fffff0] border border-[#888]" aria-label="Scroll left"><svg class="size-3"><use href="#i-sbl"/></svg></button>
        <button class="w-[14px] flex items-center justify-center bg-[#fffff0] border border-[#888]" aria-label="Scroll right"><svg class="size-3"><use href="#i-sbr"/></svg></button>
      </div>
    </section>

    <!-- Form painter -->
    <section class="flex flex-col w-[295px] shrink-0 overflow-hidden border-l-3 border-[#6c7078] border-t-2 border-b-2">
      <div class="flex items-center h-[22px] bg-[#ded6c6]">
        <button class="w-6 h-[22px] flex items-center justify-center bg-[#b4b0a4] border border-[#777]" aria-label="Close painter"><svg class="size-4"><use href="#i-close"/></svg></button>
        <span class="mx-[3px] w-px h-3 bg-[#aaa]"></span>
        <button class="w-6 h-[22px] flex items-center justify-center border border-white border-r-[#777] border-b-[#777]" aria-label="Select"><svg class="size-4"><use href="#i-marquee"/></svg></button>
        <span class="mx-1 w-px h-3 bg-[#aaa]"></span>
        <button class="w-6 h-[22px] flex items-center justify-center border border-white border-r-[#777] border-b-[#777]" aria-label="Bring to front"><svg class="size-4"><use href="#i-overlap"/></svg></button>
        <button class="w-[72px] h-[22px] flex items-center pl-0.5 pr-0.5 border border-white border-r-[#777] border-b-[#777] text-[11px]"><svg class="size-4"><use href="#i-zoomset"/></svg><span class="ml-auto mr-[3px]">48 %</span><svg class="w-[10px] h-[11px]"><use href="#i-list"/></svg></button>
        <button class="w-6 h-[22px] flex items-center justify-center border border-white border-r-[#777] border-b-[#777]" aria-label="Zoom in"><svg class="size-4"><use href="#i-zoomin"/></svg></button>
        <button class="w-6 h-[22px] flex items-center justify-center border border-white border-r-[#777] border-b-[#777]" aria-label="Zoom out"><svg class="size-4"><use href="#i-zoomout"/></svg></button>
        <span class="mx-[3px] w-px h-3 bg-[#aaa]"></span>
        <button class="w-[25px] h-[22px] flex items-center justify-center border border-white border-r-[#777] border-b-[#777]" aria-label="Test"><svg class="size-4"><use href="#i-gauge"/></svg></button>
        <span class="mx-[3px] w-px h-3 bg-[#aaa]"></span>
        <button class="w-6 h-[22px] flex items-center justify-center bg-[#c0bcb0] border border-[#777]" aria-label="Page layout"><svg class="size-4"><use href="#i-page"/></svg></button>
        <button class="w-3 h-[22px] overflow-hidden border border-white border-r-0 border-b-[#777]" aria-label="Grid"><svg class="size-4"><use href="#i-grid"/></svg></button>
        <button class="flex-1 flex justify-end overflow-hidden" aria-label="More"><svg class="w-1.5 h-3" viewBox="0 0 6 12"><path d="M6 2v8L1 6z"/></svg></button>
      </div>

      <!-- Horizontal ruler -->
      <div class="ml-[19px] h-4 bg-[#fffff0] border border-r-0 border-[#8a8a84]">
        <svg class="w-full h-[14px]" viewBox="0 0 272 14" preserveAspectRatio="xMinYMin slice">
          <g stroke="#000" shape-rendering="crispEdges">
            <path d="M7 5v4M13 5v4M20 5v4M242 5v4M248 5v4"/>
            <path d="M30 7h28M73 7h47M142 7h43M206 7h26" stroke-width="1"/>
            <path d="M33 7h25M73 7h47M142 7h43M206 7h23" stroke-width="3" stroke-dasharray="1 5"/>
          </g>
          <path d="M26 7l8-4v8zM236 7l-8-4v8z"/>
          <g font-family="Liberation Sans" font-size="11" text-anchor="middle" fill="#222"><text x="65" y="11">50</text><text x="131" y="11">100</text><text x="196" y="11">150</text><text x="261" y="11">200</text></g>
        </svg>
      </div>

      <div class="mt-0.5 flex h-[392px]">
        <!-- Vertical ruler -->
        <svg class="w-4 h-full mr-[3px] bg-[#fffff0] border border-[#8a8a84]" viewBox="0 0 14 390">
          <g stroke="#000" shape-rendering="crispEdges">
            <path d="M7 7v47M7 77v40M7 338v50" stroke-width="4" stroke-dasharray="1 6"/>
            <path d="M7 143v42M7 208v42M7 273v42" stroke-width="2"/>
            <path d="M7 146v39M7 211v39M7 276v39" stroke-width="4" stroke-dasharray="1 5"/>
          </g>
          <g font-family="Liberation Sans" font-size="11" text-anchor="middle" fill="#222">
            <text transform="translate(11 66) rotate(-90)">50</text><text transform="translate(11 131) rotate(-90)">100</text><text transform="translate(11 196) rotate(-90)">150</text><text transform="translate(11 261) rotate(-90)">200</text><text transform="translate(11 327) rotate(-90)">250</text>
          </g>
        </svg>

        <!-- Page canvas -->
        <div class="relative flex-1 bg-white border border-r-0 border-[#8a8a84] overflow-hidden font-['Liberation_Sans',sans-serif] text-xs leading-[14px]">
          <svg class="absolute inset-0 w-full h-full" shape-rendering="crispEdges">
            <defs>
              <pattern id="dots" x="1" y="1" width="65" height="65" patternUnits="userSpaceOnUse">
                <g stroke="#555">
                  <path d="M0 .5h65" stroke-dasharray="1 1"/>
                  <path d="M.5 0v65" stroke-dasharray="1 1"/>
                  <path d="M7 7.500h58M7 13.500h58M7 20.500h58M7 26.500h58M7 33.500h58M7 39.500h58M7 46.500h58M7 52.500h58M7 59.500h58" stroke-dasharray="1 5 1 6 1 5 1 6 1 5 1 6 1 5 1 6 1 20"/>
                </g>
              </pattern>
            </defs>
            <rect x="3" y="3" width="100%" height="100%" fill="url(#dots)"/>
          </svg>

          <svg class="absolute left-[22px] top-[12px] w-[134px] h-[30px] bg-white" viewBox="0 0 134 30" font-family="Open Sans" font-weight="800" font-size="24">
            <path d="M43 2h43L74 24H43z" fill="#24408c"/>
            <text x="3" y="20"><tspan fill="#e01c24">m</tspan><tspan fill="#f4c400">y</tspan></text>
            <text x="44" y="19" font-size="16" fill="#fff">SAP</text>
            <text x="76" y="20"><tspan fill="#e01c24">.</tspan><tspan fill="#f08000">c</tspan><tspan fill="#2858b0">o</tspan><tspan fill="#00949c">m</tspan></text>
          </svg>

          <div class="absolute left-[26px] top-[59px] w-[106px] h-[52px] bg-white border border-[#222] pt-px">ADDRESS<svg class="size-4"><use href="#i-edit"/></svg></div>
          <div class="absolute left-[144px] top-[59px] w-[106px] h-[52px] bg-white border border-[#222] pt-px">INFO<svg class="size-4"><use href="#i-edit"/></svg></div>

          <!-- Selected window -->
          <div class="absolute left-[21px] top-[125px] w-[221px] h-[214px] p-[5px] bg-[repeating-linear-gradient(135deg,#333_0_1px,#fff_1px_3px)]">
            <div class="h-full bg-white border border-[#222] pt-px">MAIN<svg class="size-4"><use href="#i-edit"/></svg></div>
            <span class="absolute left-0 top-0 size-1.5 bg-black"></span><span class="absolute left-1/2 top-0 -ml-[3px] size-1.5 bg-black"></span><span class="absolute right-0 top-0 size-1.5 bg-black"></span>
            <span class="absolute left-0 top-1/2 -mt-[3px] size-1.5 bg-black"></span><span class="absolute right-0 top-1/2 -mt-[3px] size-1.5 bg-black"></span>
            <span class="absolute left-0 bottom-0 size-1.5 bg-black"></span><span class="absolute left-1/2 bottom-0 -ml-[3px] size-1.5 bg-black"></span><span class="absolute right-0 bottom-0 size-1.5 bg-black"></span>
          </div>

          <div class="absolute left-[26px] top-[347px] w-[224px] h-[33px] bg-white border border-[#222] pt-px">FOOTER<svg class="size-4"><use href="#i-edit"/></svg></div>
        </div>
      </div>
    </section>
  </main>

  <!-- Status bar -->
  <footer class="mt-[3px] mb-[5px] flex items-center h-[19px] bg-[#ccccba] border-y border-[#8c8c84]">
    <svg class="ml-auto size-3"><use href="#i-closed"/></svg>
    <div class="ml-[3px] flex items-center self-stretch border-l-2 border-t border-[#777] bg-[#c8c8b6]">
      <span class="pl-[3px] pr-[3px]">P00 (1) (000)</span>
      <button aria-label="System info"><svg class="w-3 h-3" viewBox="0 0 12 12"><path d="M.5.5h11v11H.5z" fill="#fffff0" stroke="#555"/><path d="M1 3l3 2-3 2z"/><path d="M5 3h5M5 8.500h5" stroke="#222"/><path d="M5 4h5v4H5z" fill="#c8b400"/></svg></button>
      <span class="ml-[3px] px-[3px] border-l border-[#aaa898]">pwdf0127</span>
      <span class="px-[5px] border-l border-[#aaa898]">INS</span>
    </div>
    <svg class="w-4 h-[17px]" viewBox="0 0 16 17"><path d="M0 0h16L2 17H0z" fill="#ded6c6"/><path d="M16 0v17H2z" fill="#94b2c6"/><path d="M16 1L2 17M16 6l-9 11M16 11l-5 6" stroke="#e4ecf0"/></svg>
  </footer>
</body>
</html>
